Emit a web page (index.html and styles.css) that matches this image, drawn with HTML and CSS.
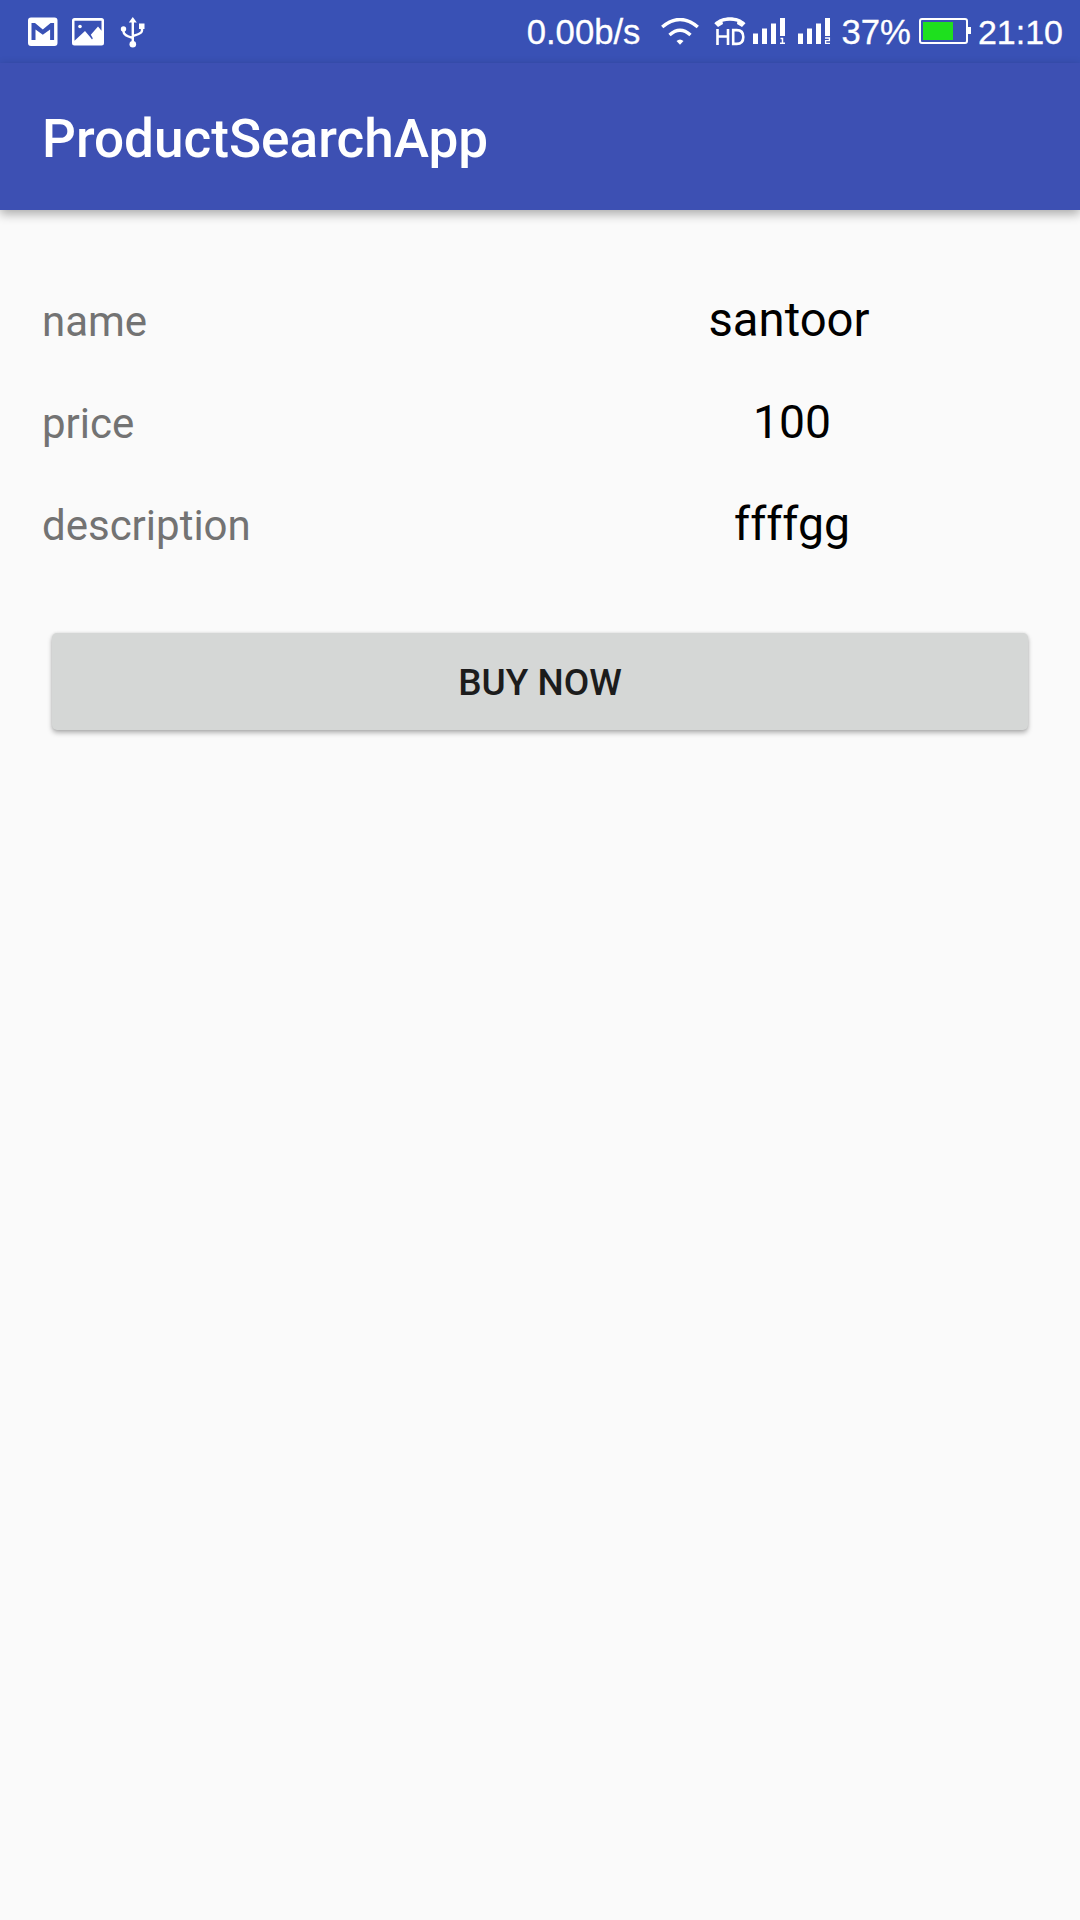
FILE: index.html
```html
<!DOCTYPE html>
<html lang="en">
<head>
<meta charset="utf-8">
<title>ProductSearchApp</title>
<link rel="stylesheet" href="styles.css">
</head>
<body>
<div class="status-bar">
  <div class="notifications">
    <svg width="30" height="30" viewBox="0 0 30 30"><path fill="#fff" fill-rule="evenodd" d="M3 0.5h23.500a3 3 0 0 1 3 3v22.500a3 3 0 0 1-3 3H3a3 3 0 0 1-3-3V3.500a3 3 0 0 1 3-3zM3.500 6v17h4V12.500l7.300 5.300 7.300-5.300V23h4V6h-3.500l-7.800 6.500L7 6z"/></svg>
    <svg width="32" height="28" viewBox="0 0 32 28"><path fill="#fff" fill-rule="evenodd" d="M2.500 0h27A2.500 2.500 0 0 1 32 2.500v22.500a2.500 2.500 0 0 1-2.500 2.500h-27A2.500 2.500 0 0 1 0 25V2.500A2.500 2.500 0 0 1 2.500 0zM2.500 2.800v20L13 13l5.500 6.500 1.500 2 .8-1.200-2-3.600L26 8.500l3.500 4.300v-10z"/><circle cx="8" cy="8.500" r="1.800" fill="#fff"/></svg>
    <svg class="usb" width="26" height="31" viewBox="0 0 26 31"><g fill="none" stroke="#fff" stroke-width="2.400"><path d="M12.800 4v22M3.500 12v2.500c0 4 5 5 9.300 6.500M22 10v3.500c0 3.500-5 4-9.200 5.500"/></g><path fill="#fff" d="M12.800 0l4 5.500h-8zM19 6.500h5.500v5.500H19z"/><circle cx="3.500" cy="12" r="2.700" fill="#fff"/><circle cx="12.800" cy="27.300" r="3.300" fill="#fff"/></svg>
  </div>
  <div class="system">
    <span class="speed">0.00b/s</span>
    <svg class="wifi" width="38" height="27" viewBox="0 0 38 27"><g fill="none" stroke="#fff" stroke-width="3.400"><path d="M1.200 9Q19-6 36.800 9"/><path d="M8.500 17Q19 7.500 29.500 17"/></g><path fill="#fff" d="M15.500 23q3.500-3 7 0L19 26.800z"/></svg>
    <svg class="volte" width="32" height="29" viewBox="0 0 32 29"><path fill="#fff" d="M.3 6.200C8-1.800 24-1.800 31.500 6.200L28 10l-5-3 .3-2.200Q16 2.500 8.500 4.800L9 7l-5 3z"/><g fill="none" stroke="#fff" stroke-width="2.600"><path d="M3.500 12v16M14 12v16M3.500 19.500H14M19.200 13.100h3.500c4 0 6.600 2.500 6.600 6.900s-2.600 6.900-6.600 6.900h-3.500z"/></g></svg>
    <svg class="signal" width="33" height="27" viewBox="0 0 33 27"><path fill="#fff" d="M0 15.500h5V26H0zM9 10.500h5V26H9zM18 5.500h5V26h-5zM27 0h5v18h-5z"/><path fill="none" stroke="#fff" stroke-width="1.500" d="M27.500 20.600h2V25M27 25.300h5"/></svg>
    <svg class="signal" width="33" height="27" viewBox="0 0 33 27"><path fill="#fff" d="M0 15.500h5V26H0zM9 10.500h5V26H9zM18 5.500h5V26h-5zM27 0h5v18h-5z"/><path fill="none" stroke="#fff" stroke-width="1.300" d="M27 20h4.400v2.600h-3.800v2.800H32"/></svg>
    <span class="percent">37%</span>
    <svg class="battery" width="52" height="26" viewBox="0 0 52 26"><rect x="1" y="1" width="47" height="24" rx="2" fill="none" stroke="#fff" stroke-width="2"/><path fill="#fff" d="M49 9h3v7h-3z"/><path fill="#1ee01e" d="M4 4h30v18H4z"/></svg>
    <span class="clock">21:10</span>
  </div>
</div>
<header class="app-bar"><h1>ProductSearchApp</h1></header>
<main class="content">
  <dl class="details">
    <dt>name</dt><dd>santoor</dd>
    <dt>price</dt><dd class="inset">100</dd>
    <dt>description</dt><dd class="inset">ffffgg</dd>
  </dl>
  <button class="buy" type="button">BUY NOW</button>
</main>
</body>
</html>
```
FILE: styles.css
```css
* { box-sizing: border-box; }

body {
  margin: 0;
  min-height: 1920px;
  background: #fafafa;
  font-family: Roboto, sans-serif;
}

svg { display: block; flex: none; }

.status-bar {
  display: flex;
  justify-content: space-between;
  height: 63px;
  padding: 0 17px 0 28px;
  background: #3951b5;
  color: #fff;
  font: 34px/65px "Liberation Sans", sans-serif;
  -webkit-text-stroke: .3px #fff;
}

.notifications {
  display: flex;
  align-items: center;
  gap: 14px;
  height: 64px;
}

.usb { margin-left: 2px; }

.system {
  display: flex;
  align-items: flex-start;
  white-space: nowrap;
}

.speed { font-size: 34.7px; }
.wifi { margin: 18px 15px 0 21px; }
.volte { margin: 17px 7px 0 0; }
.signal { margin: 18px 12px 0 0; }
.percent { margin-left: -2px; font-size: 34.7px; }
.battery { margin: 18px 7px 0 8px; }

.app-bar {
  display: flex;
  align-items: center;
  height: 147px;
  padding: 5px 42px 0;
  background: #3d50b3;
  color: #fff;
  box-shadow: 0 4px 10px rgba(0, 0, 0, .32);
}

.app-bar h1 {
  margin: 0;
  font-size: 53.1px;
  font-weight: 500;
}

.content { padding: 82px 42px 0; }

.details {
  display: grid;
  grid-template-columns: 1fr 1fr;
  grid-auto-rows: 102px;
  align-items: baseline;
  margin: 0;
}

.details dt {
  color: #737373;
  font-size: 42px;
}

.details dd {
  margin: 0;
  color: #000;
  font-size: 47.25px;
  line-height: 56px;
  text-align: center;
}

.details .inset {
  padding-left: 6px;
  font-size: 46.3px;
  line-height: 57px;
}

.buy {
  display: block;
  width: calc(100% - 20px);
  height: 97px;
  margin: 35px 10px 0;
  padding: 2px 0 0;
  border: 0;
  border-radius: 5px;
  background: #d5d7d6;
  color: #1c1c1c;
  box-shadow: 0 3px 5px rgba(0, 0, 0, .28), 0 0 3px rgba(0, 0, 0, .12);
  font: 500 37px Roboto, sans-serif;
}
```
